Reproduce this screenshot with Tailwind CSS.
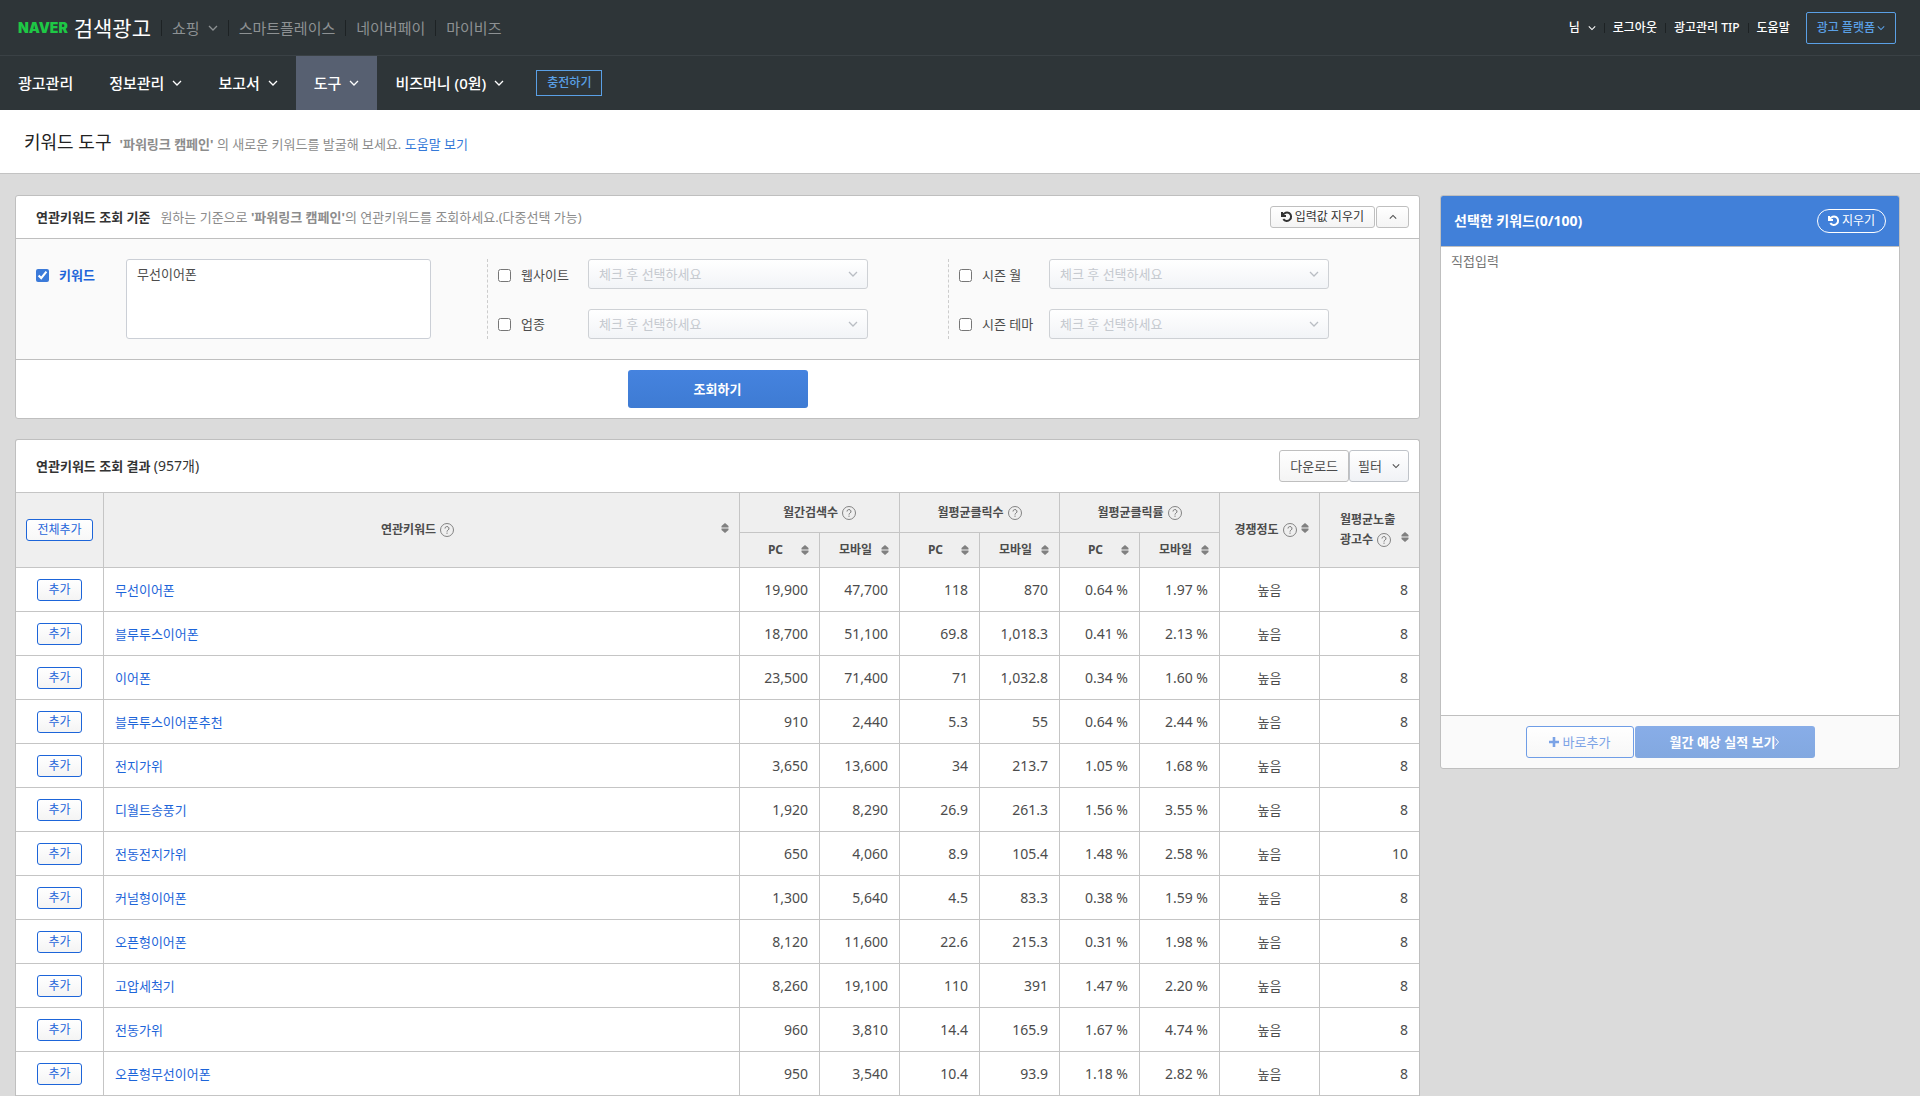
<!DOCTYPE html>
<html lang="ko">
<head>
    <meta charset="UTF-8">
    <meta name="viewport" content="width=device-width, initial-scale=1.0">
    <title>키워드 도구 : 네이버 검색광고</title>
    <script src="https://cdn.jsdelivr.net/npm/@tailwindcss/browser@4"></script>
</head>
<body class="bg-[#dbdbdb] font-['Noto_Sans','Noto_Sans_CJK_KR',sans-serif] text-[13px] leading-5 text-[#4c4c4c]">

<!-- Shared icons -->
<svg class="hidden">
    <symbol id="chevron" viewBox="0 0 10 10"><path d="M1 3l4 4 4-4" fill="none" stroke="currentColor" stroke-width="1.3"/></symbol>
    <symbol id="undo" viewBox="0 0 12 12"><path d="M1 1v4h4M1.600 4.400C3 1.600 6 .9 8.300 2.100a4.300 4.300 0 1 1-6 6" fill="none" stroke="currentColor" stroke-width="2"/></symbol>
    <symbol id="help" viewBox="0 0 14 14"><circle cx="7" cy="7" r="6.500" fill="none" stroke="currentColor" stroke-width=".9"/><path d="M5 5.500a2 1.900 0 1 1 3 1.600q-1 .6-1 1.500M7 9.600v1.200" fill="none" stroke="currentColor"/></symbol>
    <symbol id="sort" viewBox="0 0 8 10"><path d="M4 0L7.500 3V4.400H.5V3zM.5 5.600h7V7L4 10 .5 7z" fill="currentColor"/></symbol>
</svg>

<header class="bg-[#2e3538] text-white">
    <div class="flex h-14 items-center justify-between border-b border-[#3a4145] pr-6 pl-[18px]">
        <div class="flex items-center text-[15px] text-[#8d9193]">
            <a href="#" class="flex items-center gap-1.5">
                <span class="font-['Inter',sans-serif] text-sm font-black text-[#1ec845]">NAVER</span>
                <span class="text-[21px] leading-6 text-white">검색광고</span>
            </a>
            <span class="mx-2.5 h-4 w-px bg-[#1d2224]"></span>
            <a href="#" class="flex items-center gap-2">쇼핑 <svg class="size-2.5"><use href="#chevron"/></svg></a>
            <span class="mx-2.5 h-4 w-px bg-[#1d2224]"></span>
            <a href="#">스마트플레이스</a>
            <span class="mx-2.5 h-4 w-px bg-[#1d2224]"></span>
            <a href="#">네이버페이</a>
            <span class="mx-2.5 h-4 w-px bg-[#1d2224]"></span>
            <a href="#">마이비즈</a>
        </div>
        <div class="flex items-center text-xs font-medium">
            <a href="#" class="flex items-center gap-2">님 <svg class="size-2"><use href="#chevron"/></svg></a>
            <span class="mx-2 h-2.5 w-px bg-[#1d2224]"></span>
            <a href="#">로그아웃</a>
            <span class="mx-2 h-2.5 w-px bg-[#1d2224]"></span>
            <a href="#">광고관리 TIP</a>
            <span class="mx-2 h-2.5 w-px bg-[#1d2224]"></span>
            <a href="#">도움말</a>
            <button class="ml-4 flex h-8 items-center gap-0.5 rounded-xs border border-[#5aa0e6] px-2.5 text-[#5aa0e6]">광고 플랫폼 <svg class="size-2"><use href="#chevron"/></svg></button>
        </div>
    </div>
    <nav class="flex h-[54px] items-center text-[15px] font-medium">
        <a href="#" class="px-[18px]">광고관리</a>
        <a href="#" class="flex items-center gap-2 px-[18px]">정보관리 <svg class="size-2.5"><use href="#chevron"/></svg></a>
        <a href="#" class="flex items-center gap-2 px-[18px]">보고서 <svg class="size-2.5"><use href="#chevron"/></svg></a>
        <a href="#" class="flex h-full items-center gap-2 bg-[#576071] px-[18px]">도구 <svg class="size-2.5"><use href="#chevron"/></svg></a>
        <a href="#" class="flex items-center gap-2 px-[18px]">비즈머니 (0원) <svg class="size-2.5"><use href="#chevron"/></svg></a>
        <button class="ml-3.5 h-[26px] border border-[#5aa0e6] px-2.5 text-xs text-[#5aa0e6]">충전하기</button>
    </nav>
</header>

<div class="flex h-16 items-center gap-2 border-b border-[#c3c3c3] bg-white px-6">
    <h1 class="text-lg text-[#222]">키워드 도구</h1>
    <p class="pt-1 text-[#8c8c8c]"><b>'파워링크 캠페인'</b> 의 새로운 키워드를 발굴해 보세요. <a href="#" class="text-[#3579d8]">도움말 보기</a></p>
</div>

<main class="flex items-start gap-5 pt-[21px] pr-5 pl-[15px]">
    <div class="min-w-0 flex-1">
        <!-- Search criteria -->
        <section class="mb-5 rounded-[3px] border border-[#bfbfbf] bg-white">
            <div class="flex h-[43px] items-center border-b border-[#bfbfbf] pr-2.5 pl-5">
                <h2 class="mr-2.5 font-bold text-[#333]">연관키워드 조회 기준</h2>
                <p class="text-[#8c8c8c]">원하는 기준으로 <b>'파워링크 캠페인'</b>의 연관키워드를 조회하세요.(다중선택 가능)</p>
                <button class="ml-auto flex h-[22px] items-center gap-0.5 rounded-[3px] border border-[#bfbfbf] bg-linear-to-b from-white to-[#f4f4f4] px-2.5 text-xs text-[#333]"><svg class="size-3"><use href="#undo"/></svg>입력값 지우기</button>
                <button aria-label="접기" class="ml-px flex h-[22px] w-[33px] items-center justify-center rounded-[3px] border border-[#bfbfbf] bg-linear-to-b from-white to-[#f4f4f4]"><svg class="size-2 rotate-180"><use href="#chevron"/></svg></button>
            </div>
            <div class="grid grid-cols-3 border-b border-[#bfbfbf] bg-[#fafafa] px-2.5 py-5">
                <div class="flex pl-2.5">
                    <label class="flex h-8 w-[90px] items-center gap-2.5 font-bold text-[#1d65d9]"><input type="checkbox" checked class="size-[13px] accent-[#3b7ad9]">키워드</label>
                    <textarea aria-label="키워드" class="h-20 w-[305px] resize-none rounded-[3px] border border-[#cbcfd6] bg-white px-2.5 py-1">무선이어폰</textarea>
                </div>
                <div class="flex flex-col justify-between border-l border-dashed border-[#ccc] pl-2.5">
                    <div class="flex">
                        <label for="site" class="flex h-8 w-[90px] items-center gap-2.5"><input type="checkbox" id="site" class="size-[13px]">웹사이트</label>
                        <div class="relative w-[280px]">
                            <select disabled aria-label="웹사이트 선택" class="h-[30px] w-full appearance-none rounded-[3px] border border-[#ced1d5] bg-linear-to-b from-white to-[#f2f4f7] px-2.5 text-[#c5c9cf]"><option>체크 후 선택하세요</option></select>
                            <svg class="absolute top-2.5 right-2.5 size-2.5 text-[#b9bdc3]"><use href="#chevron"/></svg>
                        </div>
                    </div>
                    <div class="flex">
                        <label for="biz" class="flex h-[30px] w-[90px] items-center gap-2.5"><input type="checkbox" id="biz" class="size-[13px]">업종</label>
                        <div class="relative w-[280px]">
                            <select disabled aria-label="업종 선택" class="h-[30px] w-full appearance-none rounded-[3px] border border-[#ced1d5] bg-linear-to-b from-white to-[#f2f4f7] px-2.5 text-[#c5c9cf]"><option>체크 후 선택하세요</option></select>
                            <svg class="absolute top-2.5 right-2.5 size-2.5 text-[#b9bdc3]"><use href="#chevron"/></svg>
                        </div>
                    </div>
                </div>
                <div class="flex flex-col justify-between border-l border-dashed border-[#ccc] pl-2.5">
                    <div class="flex">
                        <label for="month" class="flex h-8 w-[90px] items-center gap-2.5"><input type="checkbox" id="month" class="size-[13px]">시즌 월</label>
                        <div class="relative w-[280px]">
                            <select disabled aria-label="시즌 월 선택" class="h-[30px] w-full appearance-none rounded-[3px] border border-[#ced1d5] bg-linear-to-b from-white to-[#f2f4f7] px-2.5 text-[#c5c9cf]"><option>체크 후 선택하세요</option></select>
                            <svg class="absolute top-2.5 right-2.5 size-2.5 text-[#b9bdc3]"><use href="#chevron"/></svg>
                        </div>
                    </div>
                    <div class="flex">
                        <label for="theme" class="flex h-[30px] w-[90px] items-center gap-2.5"><input type="checkbox" id="theme" class="size-[13px]">시즌 테마</label>
                        <div class="relative w-[280px]">
                            <select disabled aria-label="시즌 테마 선택" class="h-[30px] w-full appearance-none rounded-[3px] border border-[#ced1d5] bg-linear-to-b from-white to-[#f2f4f7] px-2.5 text-[#c5c9cf]"><option>체크 후 선택하세요</option></select>
                            <svg class="absolute top-2.5 right-2.5 size-2.5 text-[#b9bdc3]"><use href="#chevron"/></svg>
                        </div>
                    </div>
                </div>
            </div>
            <div class="flex justify-center py-2.5">
                <button class="h-[38px] w-[180px] rounded-[3px] bg-linear-to-b from-[#4583df] to-[#3e7bd3] font-bold text-white">조회하기</button>
            </div>
        </section>

        <!-- Results -->
        <section class="rounded-t-[3px] border border-b-0 border-[#bfbfbf] bg-white">
            <div class="flex h-[53px] items-center border-b border-[#c5c5c5] pr-2.5 pl-5">
                <h2 class="text-[#333]"><b>연관키워드 조회 결과</b> <span class="text-sm">(957개)</span></h2>
                <button class="ml-auto h-8 rounded-[3px] border border-[#bfbfbf] bg-linear-to-b from-white to-[#f4f4f4] px-2.5">다운로드</button>
                <button class="flex h-8 items-center gap-2.5 rounded-[3px] border border-[#bfc3c9] bg-linear-to-b from-white to-[#f0f2f6] px-2">필터 <svg class="size-2"><use href="#chevron"/></svg></button>
            </div>
            <table class="w-full table-fixed border-separate border-spacing-0">
                <colgroup>
                    <col class="w-[88px]"><col>
                    <col class="w-20"><col class="w-20"><col class="w-20"><col class="w-20"><col class="w-20"><col class="w-20">
                    <col class="w-[100px]"><col class="w-[99px]">
                </colgroup>
                <thead class="bg-[#efefef] text-xs leading-5 *:*:border-b *:*:border-[#c5c5c5] *:*:p-0 *:*:font-bold">
                <tr class="h-10">
                    <th rowspan="2" class="border-r"><button class="h-[22px] rounded-[3px] border border-[#1d65d9] bg-linear-to-b from-white to-[#f7f7f7] px-2.5 font-normal leading-5 text-[#1d65d9]">전체추가</button></th>
                    <th rowspan="2" class="border-r">
                        <div class="flex items-center px-2.5"><span class="flex flex-1 items-center justify-center gap-1">연관키워드 <svg class="size-3.5 text-[#777]"><use href="#help"/></svg></span><svg class="mb-1 h-2.5 w-2 text-[#808080]"><use href="#sort"/></svg></div>
                    </th>
                    <th colspan="2" class="border-r"><div class="flex items-center justify-center gap-1">월간검색수 <svg class="size-3.5 text-[#777]"><use href="#help"/></svg></div></th>
                    <th colspan="2" class="border-r"><div class="flex items-center justify-center gap-1">월평균클릭수 <svg class="size-3.5 text-[#777]"><use href="#help"/></svg></div></th>
                    <th colspan="2" class="border-r"><div class="flex items-center justify-center gap-1">월평균클릭률 <svg class="size-3.5 text-[#777]"><use href="#help"/></svg></div></th>
                    <th rowspan="2" class="border-r">
                        <div class="flex items-center px-2.5"><span class="flex flex-1 items-center justify-center gap-1">경쟁정도 <svg class="size-3.5 text-[#777]"><use href="#help"/></svg></span><svg class="mb-1 h-2.5 w-2 text-[#808080]"><use href="#sort"/></svg></div>
                    </th>
                    <th rowspan="2">
                        <div class="flex items-end justify-between pr-2.5 pl-5 text-left"><span>월평균노출<span class="flex items-center gap-1">광고수 <svg class="size-3.5 text-[#777]"><use href="#help"/></svg></span></span><svg class="mb-2 h-2.5 w-2 text-[#808080]"><use href="#sort"/></svg></div>
                    </th>
                </tr>
                <tr class="h-[35px]">
                    <th class="border-r"><div class="flex items-center px-2.5"><span class="flex-1">PC</span><svg class="h-2.5 w-2 text-[#808080]"><use href="#sort"/></svg></div></th>
                    <th class="border-r"><div class="flex items-center px-2.5"><span class="flex-1">모바일</span><svg class="h-2.5 w-2 text-[#808080]"><use href="#sort"/></svg></div></th>
                    <th class="border-r"><div class="flex items-center px-2.5"><span class="flex-1">PC</span><svg class="h-2.5 w-2 text-[#808080]"><use href="#sort"/></svg></div></th>
                    <th class="border-r"><div class="flex items-center px-2.5"><span class="flex-1">모바일</span><svg class="h-2.5 w-2 text-[#808080]"><use href="#sort"/></svg></div></th>
                    <th class="border-r"><div class="flex items-center px-2.5"><span class="flex-1">PC</span><svg class="h-2.5 w-2 text-[#808080]"><use href="#sort"/></svg></div></th>
                    <th class="border-r"><div class="flex items-center px-2.5"><span class="flex-1">모바일</span><svg class="h-2.5 w-2 text-[#808080]"><use href="#sort"/></svg></div></th>
                </tr>
                </thead>
                <tbody id="keyword-rows"></tbody>
            </table>
        </section>
    </div>

    <!-- Selected keywords -->
    <aside class="w-[460px] shrink-0 overflow-hidden rounded-[3px] border border-[#bfbfbf] bg-[#fafafa]">
        <div class="flex h-[50px] items-center justify-between bg-[#4180d9] px-[13px] text-white">
            <h2 class="text-sm font-bold">선택한 키워드(0/100)</h2>
            <button class="flex h-6 items-center gap-0.5 rounded-full border border-white px-2.5 text-xs"><svg class="size-3"><use href="#undo"/></svg>지우기</button>
        </div>
        <textarea aria-label="선택한 키워드" placeholder="직접입력" class="block h-[470px] w-full resize-none border-y border-[#bfbfbf] bg-white px-2.5 py-1 placeholder:text-[#757575]"></textarea>
        <div class="flex justify-center gap-px py-2.5">
            <button disabled class="flex h-8 w-[108px] items-center justify-center gap-1 rounded-[3px] border border-[#6f9de6] bg-linear-to-b from-white to-[#f7f7f7] text-[#7ba3e6]"><svg class="size-2.5" viewBox="0 0 10 10"><path d="M5 0v10M0 5h10" stroke="currentColor" stroke-width="2.600"/></svg>바로추가</button>
            <button disabled class="flex h-8 w-[180px] items-center justify-center rounded-[3px] bg-linear-to-b from-[#88ade8] to-[#82a8e0] font-bold text-white">월간 예상 실적 보기<svg class="h-2 w-1" viewBox="0 0 4 8"><path d="M.5.5L3.500 4 .5 7.500" fill="none" stroke="currentColor"/></svg></button>
        </div>
    </aside>
</main>

<script>
    // keyword, searches (PC, mobile), clicks (PC, mobile), CTR (PC, mobile), competition, ad count
    const keywords = [
        ['무선이어폰', '19,900', '47,700', '118', '870', '0.64 %', '1.97 %', '높음', '8'],
        ['블루투스이어폰', '18,700', '51,100', '69.8', '1,018.3', '0.41 %', '2.13 %', '높음', '8'],
        ['이어폰', '23,500', '71,400', '71', '1,032.8', '0.34 %', '1.60 %', '높음', '8'],
        ['블루투스이어폰추천', '910', '2,440', '5.3', '55', '0.64 %', '2.44 %', '높음', '8'],
        ['전지가위', '3,650', '13,600', '34', '213.7', '1.05 %', '1.68 %', '높음', '8'],
        ['디월트송풍기', '1,920', '8,290', '26.9', '261.3', '1.56 %', '3.55 %', '높음', '8'],
        ['전동전지가위', '650', '4,060', '8.9', '105.4', '1.48 %', '2.58 %', '높음', '10'],
        ['커널형이어폰', '1,300', '5,640', '4.5', '83.3', '0.38 %', '1.59 %', '높음', '8'],
        ['오픈형이어폰', '8,120', '11,600', '22.6', '215.3', '0.31 %', '1.98 %', '높음', '8'],
        ['고압세척기', '8,260', '19,100', '110', '391', '1.47 %', '2.20 %', '높음', '8'],
        ['전동가위', '960', '3,810', '14.4', '165.9', '1.67 %', '4.74 %', '높음', '8'],
        ['오픈형무선이어폰', '950', '3,540', '10.4', '93.9', '1.18 %', '2.82 %', '높음', '8'],
    ];

    document.getElementById('keyword-rows').innerHTML = keywords.map(([name, ...cells]) => {
        const competition = cells[6];
        const adCount = cells[7];
        const numbers = cells.slice(0, 6).map(value => `<td class="border-r border-b border-[#c5c5c5] px-[11px] text-right text-sm">${value}</td>`).join('');
        return `
            <tr class="h-11">
                <td class="border-r border-b border-[#c5c5c5] p-0 text-center"><button class="h-[22px] rounded-[3px] border border-[#1d65d9] bg-linear-to-b from-white to-[#f4f4f4] px-2.5 text-xs text-[#1d65d9]">추가</button></td>
                <td class="border-r border-b border-[#c5c5c5] px-[11px]"><a href="#" class="text-[#1d65d9]">${name}</a></td>
                ${numbers}
                <td class="border-r border-b border-[#c5c5c5] text-center">${competition}</td>
                <td class="border-b border-[#c5c5c5] px-[11px] text-right text-sm">${adCount}</td>
            </tr>`;
    }).join('');
</script>
</body>
</html>
